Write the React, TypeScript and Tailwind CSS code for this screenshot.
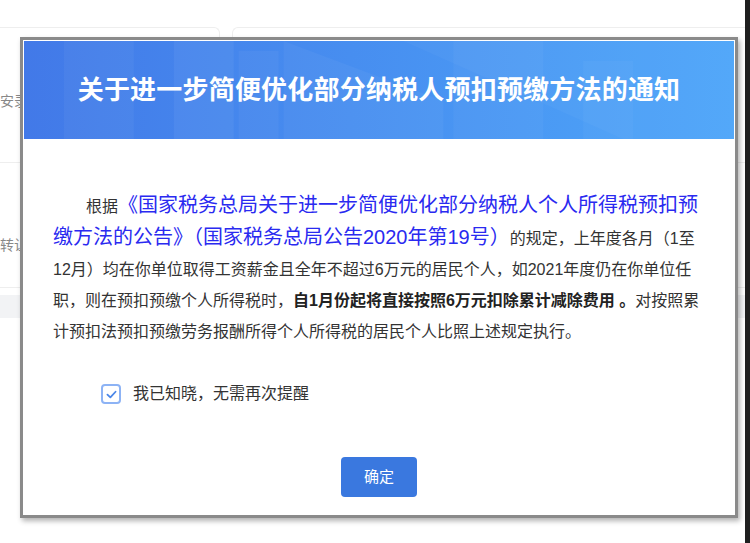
import React from 'react';

const cjk = "font-['Liberation_Sans','Noto_Sans_CJK_SC',sans-serif]";

function HeaderTexture() {
  // faint columns of a building behind the title
  return (
    <svg className="absolute inset-0 h-full w-full" viewBox="0 0 711 98" preserveAspectRatio="none">
      <rect x="40" y="0" width="70" height="98" fill="#ffffff" opacity="0.04" />
      <rect x="150" y="0" width="60" height="98" fill="#ffffff" opacity="0.05" />
      <rect x="215" y="10" width="40" height="88" fill="#ffffff" opacity="0.04" />
      <path d="M260 0 L420 60 L420 98 L260 98 Z" fill="#ffffff" opacity="0.04" />
      <rect x="430" y="0" width="90" height="98" fill="#ffffff" opacity="0.035" />
      <rect x="560" y="20" width="50" height="78" fill="#ffffff" opacity="0.03" />
      <path d="M380 0 L711 0 L711 98 L600 98 Z" fill="#ffffff" opacity="0.03" />
    </svg>
  );
}

function NoticeModal() {
  return (
    <div className="absolute left-[20px] top-[37px] flex h-[481px] w-[718px] flex-col border-[3px] border-[#8a8a8a] bg-white p-px shadow-[2px_3px_5px_rgba(0,0,0,0.3)]">
      {/* Header */}
      <div className="relative flex h-[98px] shrink-0 items-center justify-center overflow-hidden bg-gradient-to-r from-[#4279e8] to-[#4ea6f9]">
        <HeaderTexture />
        <h1 className={`relative text-[26px] font-bold tracking-[0.2px] text-white ${cjk}`}>
          关于进一步简便优化部分纳税人预扣预缴方法的通知
        </h1>
      </div>

      {/* Body */}
      <div className={`flex flex-1 flex-col pt-[51px] ${cjk}`}>
        <p className="pl-[29px] pr-[26px] indent-[33px] text-[16px] leading-[31px] text-[#333]">
          根据
          <span className="text-[20px] text-[#2a2af0]">
            《国家税务总局关于进一步简便优化部分纳税人个人所得税预扣预缴方法的公告》（国家税务总局公告2020年第19号）
          </span>
          的规定，上年度各月（1至12月）均在你单位取得工资薪金且全年不超过6万元的居民个人，如2021年度仍在你单位任职，则在预扣预缴个人所得税时，
          <b className="font-bold text-[#222]">自1月份起将直接按照6万元扣除累计减除费用 。</b>
          对按照累计预扣法预扣预缴劳务报酬所得个人所得税的居民个人比照上述规定执行。
        </p>

        <label className="mt-[35px] flex items-center gap-[12px] pl-[77px]">
          <span className="flex h-[20px] w-[20px] items-center justify-center rounded-[4px] border-2 border-[#8db3f5] bg-white">
            <svg viewBox="0 0 16 16" className="h-[13px] w-[13px]" fill="none">
              <path d="M3 8.2 L6.6 11.6 L13 4.6" stroke="#4a86e8" strokeWidth="2.2" strokeLinecap="round" strokeLinejoin="round" />
            </svg>
          </span>
          <span className="text-[16px] text-[#333]">我已知晓，无需再次提醒</span>
        </label>

        <div className="mt-[51px] flex justify-center">
          <button className="h-[40px] w-[76px] rounded-[4px] bg-[#3a78df] text-[15px] text-white">
            确定
          </button>
        </div>
      </div>
    </div>
  );
}

export default function App() {
  return (
    <div className={`relative flex h-[543px] w-[750px] overflow-hidden bg-white ${cjk}`}>
      {/* Page behind the dialog */}
      <div className="flex flex-1 flex-col pt-[27px]">
        <div className="flex h-[125px] gap-[12px]">
          <div className="flex w-[220px] items-end rounded-tr-[6px] border-r border-t border-[#eeeeee] pb-[40px] text-[14px] text-[#888]">
            安录
          </div>
          <div className="flex-1 rounded-tl-[6px] border-l border-t border-[#eeeeee]" />
        </div>
        <div className="mt-[10px] flex h-[126px] items-end border-b border-t border-[#eeeeee] pb-[31px] text-[14px] text-[#888]">
          转让
        </div>
        <div className="mt-[7px] h-[23px] bg-[#f2f3f5]" />
      </div>
      <div className="w-[5px] bg-[#1f1f1f]" />

      <NoticeModal />
    </div>
  );
}
